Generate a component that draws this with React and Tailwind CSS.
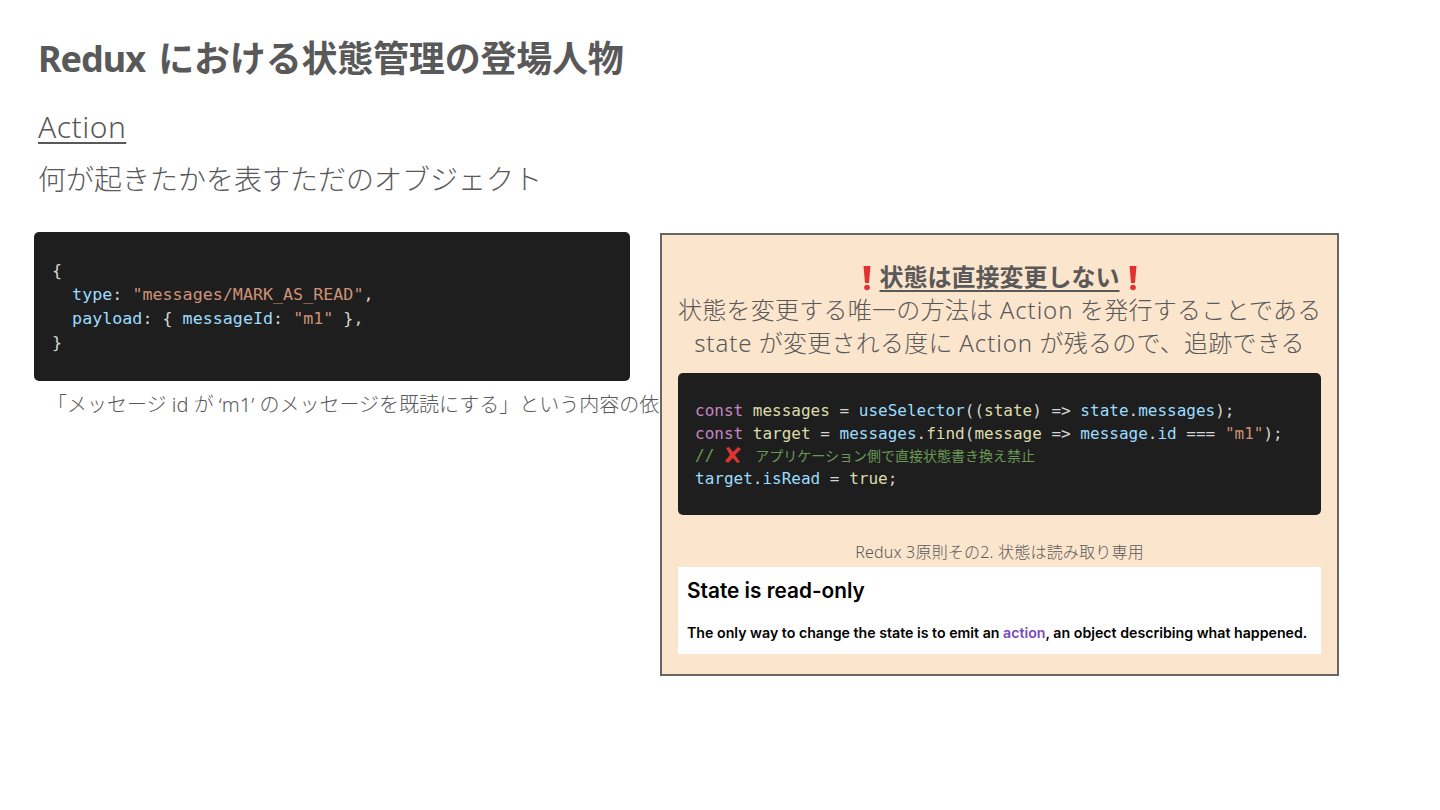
import React from "react";

const jp = "font-['Noto_Sans','Noto_Sans_CJK_JP',sans-serif]";
const mono = "font-['DejaVu_Sans_Mono','Noto_Sans_CJK_JP',monospace]";

const Bang = () => (
  <svg viewBox="0 0 8 26" className="inline-block w-[8px] h-[26px] align-[-5px] mx-[9px]">
    <path d="M0.5 1h7l-1.5 17h-4z" fill="#e0332f" />
    <circle cx="4" cy="22.5" r="2.8" fill="#e0332f" />
  </svg>
);

const Cross = () => (
  <svg viewBox="0 0 18 18" className="inline-block w-[18px] h-[18px] align-[-3px] ml-[10px] mr-[13px]">
    <path d="M2 2l3-1 4 5 5-5 3 2-6 6 5 7-3 1-4-5-5 5-3-2 5-6z" fill="#e0332f" />
  </svg>
);

const Kw = ({ children }) => <span className="text-[#c586c0]">{children}</span>;
const Blue = ({ children }) => <span className="text-[#9cdcfe]">{children}</span>;
const Str = ({ children }) => <span className="text-[#ce9178]">{children}</span>;
const Fn = ({ children }) => <span className="text-[#dcdcaa]">{children}</span>;
const Latin = ({ children }) => <span className="tracking-[0.9px]">{children}</span>;

export default function App() {
  return (
    <div className={`h-[810px] w-[1440px] bg-white text-[#595959] overflow-hidden ${jp}`}>
      <div className="pl-[38px] pt-[33px]">
        <h1 className="text-[36px] leading-[52px] font-bold whitespace-nowrap tracking-[-0.2px]">
          <span className="tracking-[-1px] mr-[4px]">Redux</span> における状態管理の登場人物
        </h1>
        <p className="mt-[20px] text-[30px] leading-[44px] font-light tracking-[0.5px] underline underline-offset-[4px] decoration-2">Action</p>
        <p className="mt-[8px] text-[28px] leading-[44px] font-light">何が起きたかを表すただのオブジェクト</p>
      </div>

      <div className="flex mt-[31px] pl-[34px] items-start">
        <div className="w-[626px] shrink-0">
          <pre className={`w-[596px] h-[149px] bg-[#1e1e1e] rounded-[5px] pl-[18px] pt-[26px] text-[16.7px] leading-[24px] text-[#d4d4d4] ${mono}`}>
            {"{\n  "}<Blue>type</Blue>{": "}<Str>"messages/MARK_AS_READ"</Str>{",\n  "}<Blue>payload</Blue>{": { "}<Blue>messageId</Blue>{": "}<Str>"m1"</Str>{" },\n}"}
          </pre>
          <p className="mt-[9px] pl-[13px] text-[20px] leading-[30px] font-light whitespace-nowrap">「メッセージ id が ‘m1’ のメッセージを既読にする」という内容の依頼</p>
        </div>

        <div className="relative w-[679px] h-[443px] mt-px shrink-0 bg-[#fce5cd] border-2 border-[#666666] px-[16px] pt-[25px]">
          <div className="text-center text-[24px] leading-[33px] tracking-[0.25px] font-light whitespace-nowrap">
            <p className="font-bold tracking-normal"><Bang /><span className="underline underline-offset-4">状態は直接変更しない</span><Bang /></p>
            <p>状態を変更する唯一の方法は <Latin>Action</Latin> を発行することである</p>
            <p><Latin>state</Latin> が変更される度に <Latin>Action</Latin> が残るので、追跡できる</p>
          </div>
          <pre className={`mt-[14px] h-[142px] bg-[#1e1e1e] rounded-[5px] pl-[17px] pt-[27px] text-[16px] leading-[22.7px] text-[#d4d4d4] ${mono}`}>
            <Kw>const</Kw> <Fn>messages</Fn>{" = "}<Blue>useSelector</Blue>{"(("}<Fn>state</Fn>{") => "}<Blue>state</Blue>{"."}<Blue>messages</Blue>{");\n"}
            <Kw>const</Kw> <Fn>target</Fn>{" = "}<Blue>messages</Blue>{"."}<Fn>find</Fn>{"("}<Fn>message</Fn>{" => "}<Blue>message</Blue>{"."}<Blue>id</Blue>{" === "}<Str>"m1"</Str>{");\n"}
            <span className="text-[#6a9955]">//<Cross /><span className="text-[14px]">アプリケーション側で直接状態書き換え禁止</span></span>{"\n"}
            <Blue>target</Blue>{"."}<Blue>isRead</Blue>{" = "}<Fn>true</Fn>{";"}
          </pre>
          <p className="mt-[23px] text-center text-[16px] leading-[29px] tracking-[0.2px] font-light">Redux 3原則その2. 状態は読み取り専用</p>
          <div className="h-[87px] bg-white pl-[9px] pt-[10px] text-black font-['Inter',sans-serif]">
            <p className="text-[20.8px] leading-[28px] font-semibold">State is read-only</p>
            <p className="mt-[18px] text-[14.2px] leading-[20px] font-semibold whitespace-nowrap">The only way to change the state is to emit an <span className="text-[#764abc]">action</span>, an object describing what happened.</p>
          </div>
        </div>
      </div>
    </div>
  );
}
